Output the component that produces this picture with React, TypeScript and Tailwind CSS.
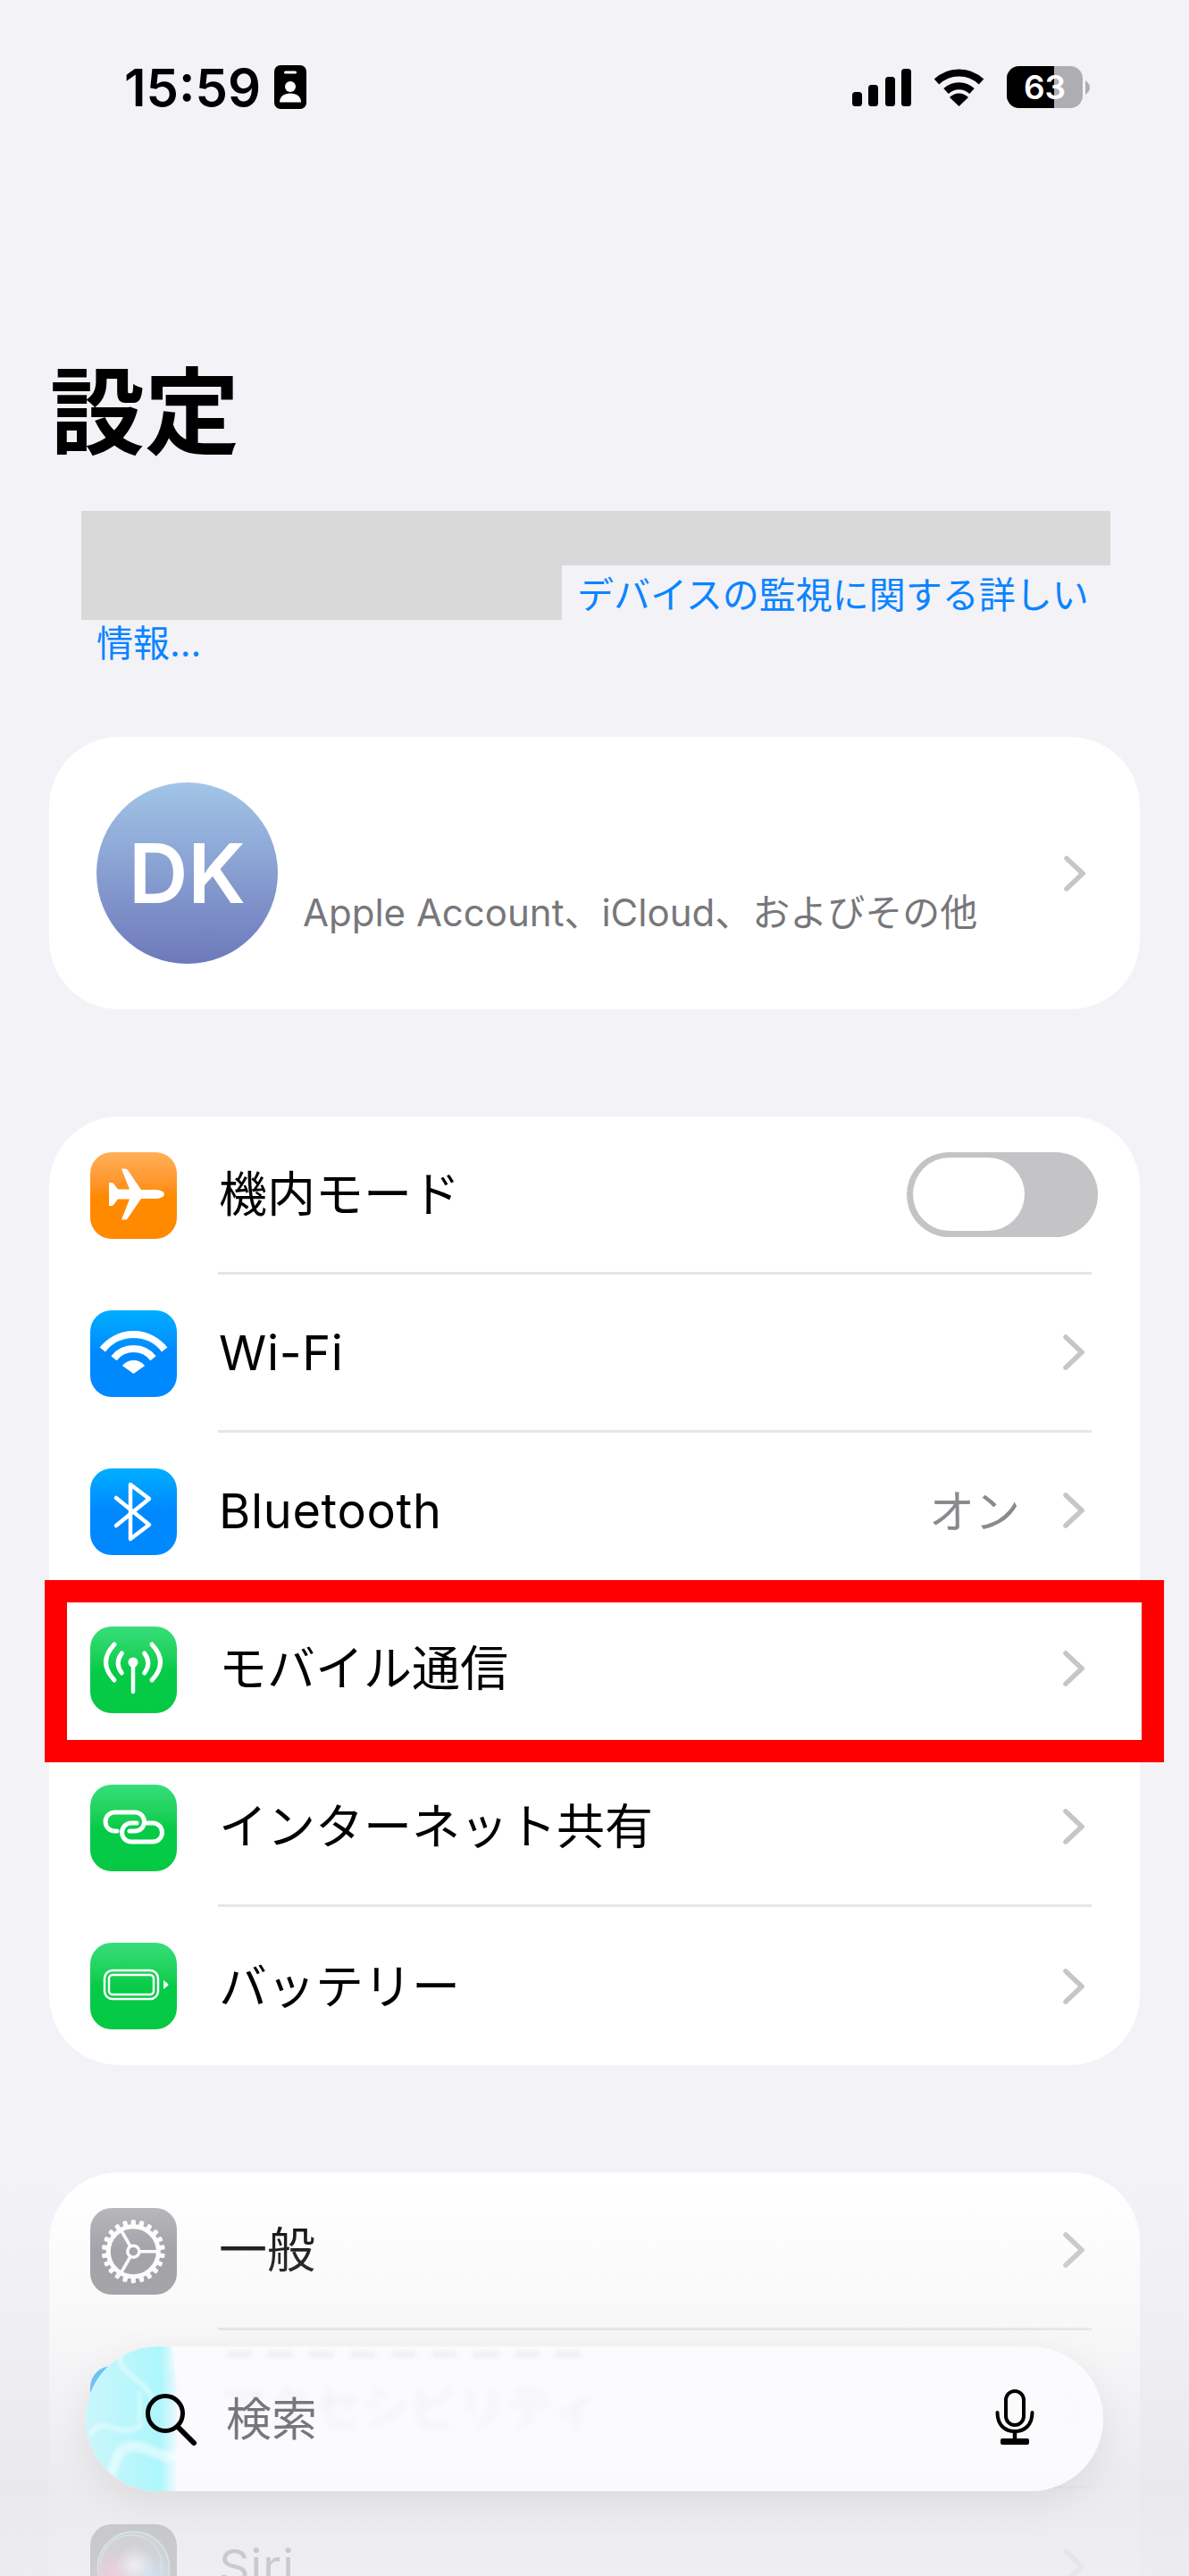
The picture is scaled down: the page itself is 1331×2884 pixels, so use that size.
import React from "react";

const Chevron = () => (
  <svg width="24" height="40" viewBox="0 0 24 40" fill="none" className="shrink-0">
    <path d="M3 3 L21 20 L3 37" stroke="#c6c6c8" strokeWidth="5.5" strokeLinecap="round" strokeLinejoin="miter" />
  </svg>
);

const Glyph = ({ children }: { children: React.ReactNode }) => (
  <svg width="97" height="97" viewBox="0 0 97 97" fill="none" className="block">
    {children}
  </svg>
);

const Plane = () => (
  <Glyph>
    <path
      fill="#fff"
      d="M83 47 C83 50 78 52 72 52 H57 L42 74 Q41 75.5 39 75.5 H35 L44 52.5 H31 L26 59 Q25 60 24 60 H21 V34 H24 Q25 34 26 35 L31 41.5 H44 L35 18.5 H39 Q41 18.5 42 20 L57 42 H72 C78 42 83 44 83 47Z"
    />
  </Glyph>
);

const WifiGlyph = () => (
  <Glyph>
    <path d="M13.8 44 A44 44 0 0 1 83.2 44" stroke="#fff" strokeWidth="8" />
    <path d="M26.5 53.8 A28 28 0 0 1 70.5 53.8" stroke="#fff" strokeWidth="8" />
    <path d="M48.5 71 L35.9 62 A16 16 0 0 1 61.1 62 Z" fill="#fff" />
  </Glyph>
);

const BluetoothGlyph = () => (
  <Glyph>
    <path d="M29 33 L66 63 L45 79 V18 L66 34 L29 64" stroke="#fff" strokeWidth="4.5" strokeLinejoin="round" strokeLinecap="round" />
  </Glyph>
);

const Antenna = () => (
  <Glyph>
    <circle cx="48" cy="40" r="5.5" fill="#fff" />
    <path d="M48 42 V73" stroke="#fff" strokeWidth="4.5" strokeLinecap="round" />
    <g stroke="#fff" strokeWidth="5" strokeLinecap="round">
      <path d="M60.7 30 Q69 41 60.7 52" />
      <path d="M69 20 Q88 40 69 60" />
      <path d="M35.3 30 Q27 41 35.3 52" />
      <path d="M27 20 Q8 40 27 60" />
    </g>
  </Glyph>
);

const LinkGlyph = () => (
  <Glyph>
    <g stroke="#fff" strokeWidth="5" strokeLinecap="round">
      <path d="M30 52 H27.5 a10.5 10.5 0 0 1 0 -21 H50 a10.5 10.5 0 0 1 0 21 H44" />
      <path d="M63.5 43 H70 a10.5 10.5 0 0 1 0 21 H46 a10.5 10.5 0 0 1 0 -21 H52" />
    </g>
  </Glyph>
);

const BatteryGlyph = () => (
  <Glyph>
    <rect x="16" y="31" width="60" height="32" rx="9" stroke="#fff" strokeWidth="2.5" />
    <rect x="21" y="36" width="50" height="22" rx="4" stroke="#fff" strokeWidth="2.5" />
    <path d="M82 42 L87 46 Q88 47 87 48 L82 52 Z" fill="#fff" />
  </Glyph>
);

const teeth = Array.from({ length: 22 }, (_, i) => (i * 360) / 22);

const Gear = () => (
  <Glyph>
    <g transform="translate(48.3 48.7)">
      <circle r="28" stroke="#fff" strokeWidth="5" />
      {teeth.map((a) => (
        <rect key={a} x="-2.6" y="-35.5" width="5.2" height="8" rx="1.5" fill="#fff" transform={`rotate(${a})`} />
      ))}
      <path d="M6 0 H28 M-3 -5.2 L-14 -24.2 M-3 5.2 L-14 24.2" stroke="#fff" strokeWidth="3.6" />
      <circle r="6.5" stroke="#fff" strokeWidth="3.5" />
    </g>
  </Glyph>
);

const AccessGlyph = () => (
  <Glyph>
    <circle cx="48.5" cy="48.5" r="34" fill="#fff" />
  </Glyph>
);

const SiriGlyph = () => (
  <Glyph>
    <defs>
      <radialGradient id="sp" cx="0.5" cy="0.5" r="0.5">
        <stop offset="0" stopColor="#ff1f70" />
        <stop offset="1" stopColor="#ff1f70" stopOpacity="0" />
      </radialGradient>
      <radialGradient id="sb" cx="0.5" cy="0.5" r="0.5">
        <stop offset="0" stopColor="#1aa4ff" />
        <stop offset="1" stopColor="#1aa4ff" stopOpacity="0" />
      </radialGradient>
      <radialGradient id="sw" cx="0.5" cy="0.5" r="0.5">
        <stop offset="0" stopColor="#fff" />
        <stop offset="1" stopColor="#fff" stopOpacity="0" />
      </radialGradient>
    </defs>
    <circle cx="48.5" cy="48.5" r="41" fill="#3a3340" />
    <circle cx="48.5" cy="48.5" r="40" stroke="#3fd8b0" strokeWidth="1.5" />
    <circle cx="46" cy="46" r="34" stroke="#8fe0c0" strokeWidth="1" />
    <circle cx="28" cy="58" r="30" fill="url(#sp)" />
    <circle cx="68" cy="58" r="26" fill="url(#sb)" />
    <circle cx="50" cy="46" r="22" fill="url(#sw)" />
  </Glyph>
);

const Tile = ({ className, children }: { className: string; children: React.ReactNode }) => (
  <div className={`w-[97px] h-[97px] rounded-[24px] shrink-0 overflow-hidden ${className}`}>{children}</div>
);

const Row = ({
  tile,
  icon,
  label,
  value,
  toggle,
  last,
  latin,
}: {
  tile: string;
  icon: React.ReactNode;
  label: string;
  value?: string;
  toggle?: boolean;
  last?: boolean;
  latin?: boolean;
}) => (
  <div className="flex items-center h-[177px] pl-[46px]">
    <Tile className={tile}>{icon}</Tile>
    <div
      className={`flex items-center flex-1 h-full ml-[46px] mr-[54px] pl-[1px] pr-[8px] ${
        last ? "" : "border-b-[3px] border-[#e6e6ea]"
      }`}
    >
      <span className={`flex-1 pt-[2px] text-[54px] leading-none text-black ${latin ? "tracking-[0.7px]" : ""}`}>{label}</span>
      {value && <span className="pt-[2px] text-[51px] leading-none text-[#8a8a8e] mr-[48px]">{value}</span>}
      {toggle ? (
        <div className="flex items-center w-[214px] h-[95px] -mr-[15px] pl-[7px] rounded-full bg-[#c4c4c6]">
          <div className="w-[125px] h-[82px] rounded-full bg-white" />
        </div>
      ) : (
        <Chevron />
      )}
    </div>
  </div>
);

const orange = "bg-gradient-to-b from-[#ffb056] via-[#ff8a00] to-[#ff8a00]";
const blue = "bg-gradient-to-b from-[#00aeff] via-[#0088ff] to-[#0088ff]";
const green = "bg-gradient-to-b from-[#36de7a] via-[#06cb48] to-[#05c943]";
const gray = "bg-gradient-to-b from-[#b5b4b9] via-[#98979d] to-[#8e8e93]";

export default function App() {
  return (
    <div className="relative w-[1331px] h-[2884px] overflow-hidden bg-[#f2f2f7] text-black font-['Inter','Noto_Sans_CJK_JP',sans-serif]">
      {/* status bar */}
      <div className="flex items-center justify-between h-[49px] mt-[73px] pl-[139px] pr-[111px] absolute top-0 left-0 right-0">
        <div className="flex items-center gap-[15px]">
          <span className="text-[58px] leading-none font-semibold">15:59</span>
          <svg width="36" height="49" viewBox="0 0 36 49">
            <rect width="36" height="49" rx="7" fill="#000" />
            <rect x="11" y="6.5" width="14" height="3" rx="1.5" fill="#fff" />
            <circle cx="18" cy="24" r="6" fill="#fff" />
            <path d="M6 41.5 C6 35 11 31.5 18 31.5 C25 31.5 30 35 30 41.5 Z" fill="#fff" />
          </svg>
        </div>
        <div className="flex items-center gap-[25px]">
          <svg width="66" height="42" viewBox="0 0 66 42" fill="#000">
            <rect x="0" y="26" width="11" height="16" rx="3.5" />
            <rect x="18" y="18" width="11" height="24" rx="3.5" />
            <rect x="37" y="9" width="11" height="33" rx="3.5" />
            <rect x="55" y="0" width="11" height="42" rx="3.5" />
          </svg>
          <svg width="57" height="42" viewBox="0 0 57 42" fill="none">
            <path d="M3.5 14.5 A36 36 0 0 1 53.5 14.5" stroke="#000" strokeWidth="8" />
            <path d="M14 25 A21 21 0 0 1 43 25" stroke="#000" strokeWidth="8" />
            <path d="M28.5 42 L18 32 A14.5 14.5 0 0 1 39 32 Z" fill="#000" />
          </svg>
          <div className="flex items-center gap-[3px]">
            <div className="relative w-[85px] h-[47px] rounded-[14px] overflow-hidden bg-[#aeaeb2]">
              <div className="w-[53px] h-full bg-black" />
              <div className="absolute inset-0 flex items-center justify-center text-[37px] leading-none font-semibold text-white">
                63
              </div>
            </div>
            <svg width="5" height="16" viewBox="0 0 5 16">
              <path d="M0 0 C3 2 5 5 5 8 C5 11 3 14 0 16 Z" fill="#aeaeb2" />
            </svg>
          </div>
        </div>
      </div>

      {/* title */}
      <div className="pt-[400px] pl-[56px] h-[572px]">
        <h1 className="text-[106px] leading-[124px] font-bold">設定</h1>
      </div>

      {/* supervision notice */}
      <div className="ml-[91px] w-[1152px] h-[253px]">
        <div className="h-[61px] bg-[#d9d9d9]" />
        <div className="flex h-[61px]">
          <div className="w-[538px] h-full bg-[#d9d9d9]" />
          <span className="pl-[17px] pt-[5px] text-[41px] leading-[56px] text-[#0a84ff] whitespace-nowrap">
            デバイスの監視に関する詳しい
          </span>
        </div>
        <div className="pl-[17px] text-[41px] leading-[52px] text-[#0a84ff]">情報...</div>
      </div>

      {/* account card */}
      <div className="flex items-center mx-[55px] h-[305px] rounded-[78px] bg-white pl-[53px] pr-[61px]">
        <div className="flex items-center justify-center w-[203px] h-[203px] rounded-full shrink-0 bg-gradient-to-b from-[#a2c5e7] to-[#6e79bb] text-[92px] leading-none font-semibold text-white">
          DK
        </div>
        <div className="flex-1 pl-[28px] pt-[88px] text-[42px] leading-none text-[#77777b] whitespace-nowrap">
          Apple Account、iCloud、およびその他
        </div>
        <Chevron />
      </div>

      {/* connectivity card */}
      <div className="mt-[120px] mx-[55px] rounded-[78px] bg-white">
        <Row tile={orange} icon={<Plane />} label="機内モード" toggle />
        <Row tile={blue} icon={<WifiGlyph />} label="Wi-Fi" latin />
        <Row tile={blue} icon={<BluetoothGlyph />} label="Bluetooth" value="オン" latin />
        <Row tile={green} icon={<Antenna />} label="モバイル通信" />
        <Row tile={green} icon={<LinkGlyph />} label="インターネット共有" />
        <Row tile={green} icon={<BatteryGlyph />} label="バッテリー" last />
      </div>

      {/* general card */}
      <div className="mt-[120px] mx-[55px] rounded-[78px] bg-white">
        <Row tile={gray} icon={<Gear />} label="一般" />
        <Row tile={blue} icon={<AccessGlyph />} label="アクセシビリティ" />
        <Row tile="bg-black" icon={<SiriGlyph />} label="Siri" latin />
      </div>

      {/* highlight frame */}
      <div className="absolute left-[50px] top-[1769px] w-[1253px] h-[204px] border-[25px] border-[#ff0000]" />

      {/* bottom fade */}
      <div className="absolute left-0 right-0 top-[2440px] bottom-0 bg-[linear-gradient(to_bottom,rgba(232,232,236,0)_0%,rgba(232,232,236,0.3)_36%,rgba(232,232,236,0.86)_78%,rgba(236,236,240,0.86)_100%)]" />

      {/* search field */}
      <div className="absolute left-[96px] top-[2627px] flex items-center w-[1139px] h-[162px] rounded-full overflow-hidden bg-[#fcfcfe]/90 backdrop-blur-[4px] shadow-[0_12px_44px_rgba(0,0,0,0.07)]">
        <div className="absolute left-[157px] top-[6px] w-[400px] h-[6px] blur-[3px] bg-[repeating-linear-gradient(90deg,#ececef_0px,#ececef_30px,transparent_30px,transparent_46px)]" />
        <svg width="110" height="162" viewBox="0 0 110 162" fill="none" className="absolute left-0 top-0">
          <defs>
            <linearGradient id="glare" x1="0" y1="0" x2="1" y2="0">
              <stop offset="0" stopColor="#c9f7fc" />
              <stop offset="0.8" stopColor="#adf6fc" />
              <stop offset="1" stopColor="#adf6fc" stopOpacity="0" />
            </linearGradient>
          </defs>
          <path d="M0 0 H96 C106 50 100 110 104 162 H0 Z" fill="url(#glare)" />
          <g stroke="#fff" strokeWidth="5" opacity="0.5" className="blur-[2px]">
            <path d="M4 100 C20 70 36 110 64 86" />
            <path d="M40 8 C30 30 70 36 74 60" />
            <path d="M14 150 C40 150 24 110 56 112 C70 112 90 130 100 120" strokeWidth="12" />
            <path d="M60 50 V84" strokeWidth="4" />
          </g>
        </svg>
        <svg width="60" height="60" viewBox="0 0 60 60" fill="none" className="absolute left-[66px] top-[53px]">
          <circle cx="23" cy="22" r="19.5" stroke="#000" strokeWidth="5" />
          <path d="M37 37 L55 55" stroke="#000" strokeWidth="6" strokeLinecap="round" />
        </svg>
        <span className="pl-[157px] flex-1 text-[51px] leading-none text-[#77777b]">検索</span>
        <svg width="44" height="62" viewBox="0 0 44 62" fill="none" className="mr-[77px] -mt-[4px]">
          <rect x="12" y="2" width="20" height="38" rx="10" stroke="#000" strokeWidth="4" />
          <path d="M2.5 26 C2.5 40 11 47 22 47 C33 47 41.5 40 41.5 26" stroke="#000" strokeWidth="4" strokeLinecap="round" />
          <path d="M22 47 V56" stroke="#000" strokeWidth="4.5" />
          <rect x="6" y="55" width="32" height="7" rx="2" fill="#000" />
        </svg>
      </div>
    </div>
  );
}
